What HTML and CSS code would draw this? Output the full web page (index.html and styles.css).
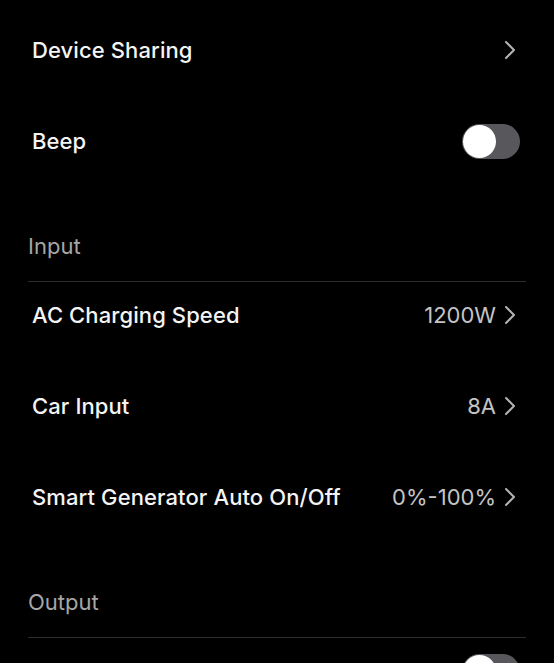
FILE: index.html
```html
<!DOCTYPE html>
<html lang="en">
<head>
  <meta charset="UTF-8">
  <title>Settings</title>
  <meta name="viewport" content="width=device-width, initial-scale=1.0">
  <link rel="stylesheet" href="styles.css">
</head>
<body>

  <main class="settings">
    <section class="grupo">
      <div class="linha">
        <span class="rotulo">Device Sharing</span>
        <span class="valor">
          <svg class="seta" viewBox="0 0 12 20" width="12" height="20"><path d="M2 2 L10 10 L2 18" /></svg>
        </span>
      </div>
      <div class="linha">
        <span class="rotulo">Beep</span>
        <span class="chave"><span class="bolinha"></span></span>
      </div>
    </section>

    <section class="grupo">
      <h2 class="titulo">Input</h2>
      <div class="linha">
        <span class="rotulo">AC Charging Speed</span>
        <span class="valor">1200W
          <svg class="seta" viewBox="0 0 12 20" width="12" height="20"><path d="M2 2 L10 10 L2 18" /></svg>
        </span>
      </div>
      <div class="linha">
        <span class="rotulo">Car Input</span>
        <span class="valor">8A
          <svg class="seta" viewBox="0 0 12 20" width="12" height="20"><path d="M2 2 L10 10 L2 18" /></svg>
        </span>
      </div>
      <div class="linha">
        <span class="rotulo">Smart Generator Auto On/Off</span>
        <span class="valor">0%-100%
          <svg class="seta" viewBox="0 0 12 20" width="12" height="20"><path d="M2 2 L10 10 L2 18" /></svg>
        </span>
      </div>
    </section>

    <section class="grupo">
      <h2 class="titulo">Output</h2>
      <div class="linha">
        <span class="rotulo">X-Boost</span>
        <span class="chave"><span class="bolinha"></span></span>
      </div>
    </section>
  </main>

</body>
</html>
```

FILE: styles.css
```css
* { margin: 0; padding: 0; box-sizing: border-box; }
html, body { background: #000; }
body { font-family: Inter, 'Noto Sans', sans-serif; color: #f4f4f4; overflow: hidden; }
.settings { padding: 17px 28px 0; }
.titulo { font-size: 22px; font-weight: 400; line-height: 26px; color: #a6a6a6; padding: 34px 0 22px; border-bottom: 1px solid #2c2c2c; }
.linha { display: flex; align-items: center; justify-content: space-between; height: 91px; padding: 0 6px 25px 4px; }
.rotulo { font-size: 22px; font-weight: 500; line-height: 26px; letter-spacing: 0.1px; }
.valor { display: flex; align-items: center; gap: 8px; margin-right: 4px; font-size: 22px; font-weight: 400; color: #c4c4c4; }
.seta { fill: none; stroke: #b4b4b4; stroke-width: 2; stroke-linecap: round; stroke-linejoin: round; }
.chave { width: 58px; height: 35px; border-radius: 18px; background: #58585c; padding: 1px; display: flex; align-items: center; }
.bolinha { width: 33px; height: 33px; border-radius: 50%; background: #fff; }
```
